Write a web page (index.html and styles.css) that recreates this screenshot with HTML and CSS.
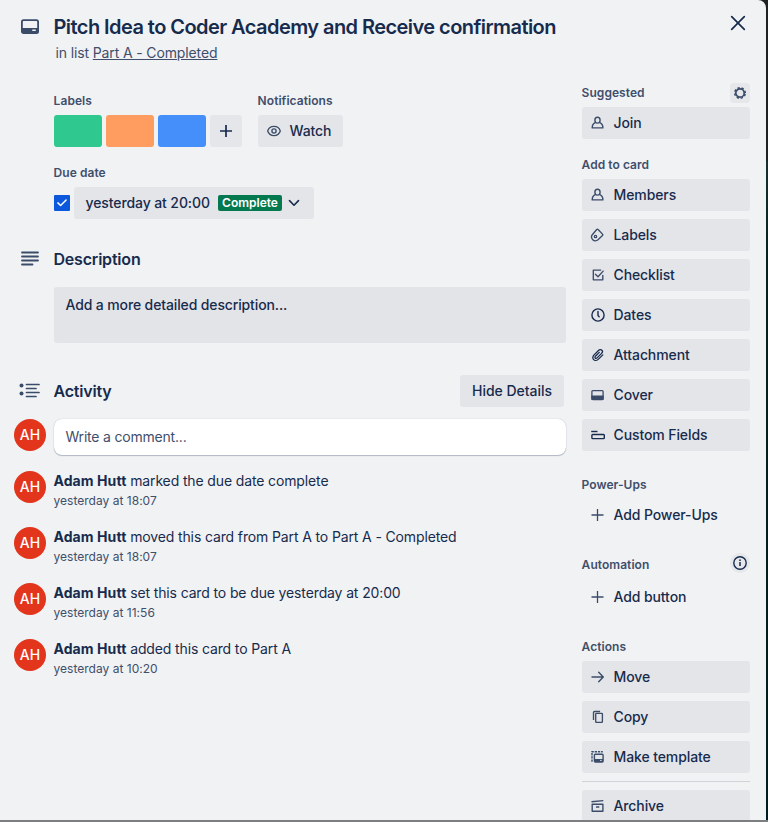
FILE: index.html
```html
<!DOCTYPE html>
<html lang="en">
<head>
<meta charset="utf-8">
<title>Pitch Idea to Coder Academy and Receive confirmation</title>
<link rel="stylesheet" href="styles.css">
</head>
<body>
<div class="card">
  <header class="header">
    <svg class="icon header-icon" width="20" height="20" viewBox="0 0 20 20"><rect x="1.900" y="3.200" width="16.200" height="12.800" rx="1.600" fill="none" stroke="currentColor" stroke-width="1.800"/><path d="M2 11h16v4.500H2z" fill="currentColor"/><rect x="12.200" y="12.500" width="3.600" height="1.500" rx=".5" fill="#f1f2f4"/></svg>
    <div class="heading">
      <h1>Pitch Idea to Coder Academy and Receive confirmation</h1>
      <p class="sub">in list <a class="list-link">Part A - Completed</a></p>
    </div>
    <svg class="close" width="16" height="16" viewBox="0 0 16 16"><path d="M1.700 1.700l12.600 12.600M14.300 1.700L1.700 14.300" fill="none" stroke="currentColor" stroke-width="1.700" stroke-linecap="round"/></svg>
  </header>
  <div class="body">
    <main class="main">
      <div class="meta">
        <section>
          <h3>Labels</h3>
          <div class="chips">
            <span class="chip green"></span><span class="chip orange"></span><span class="chip blue"></span>
            <span class="chip add"><svg width="14" height="14" viewBox="0 0 14 14"><path d="M7 1v12M1 7h12" stroke="currentColor" stroke-width="1.700"/></svg></span>
          </div>
        </section>
        <section>
          <h3>Notifications</h3>
          <div class="btn watch"><svg class="icon" width="16" height="16" viewBox="0 0 16 16"><path d="M1.700 8C2.600 5.200 5.100 3.400 8 3.400S13.400 5.200 14.300 8C13.400 10.800 10.900 12.600 8 12.600S2.600 10.800 1.700 8z" fill="none" stroke="currentColor" stroke-width="1.300"/><circle cx="8" cy="8" r="2.100" fill="none" stroke="currentColor" stroke-width="1.400"/></svg><span>Watch</span></div>
        </section>
      </div>
      <section class="due">
        <h3>Due date</h3>
        <div class="due-row">
          <span class="check"><svg width="16" height="16" viewBox="0 0 16 16"><path d="M3.900 7.900l2.700 2.600 5.500-5.500" fill="none" stroke="#fff" stroke-width="1.500" stroke-linecap="round" stroke-linejoin="round"/></svg></span>
          <div class="btn due-btn"><span>yesterday at 20:00</span><b class="badge">Complete</b><svg width="12" height="8" viewBox="0 0 12 8"><path d="M1.500 1.600L6 6.200l4.500-4.600" fill="none" stroke="currentColor" stroke-width="1.600" stroke-linecap="round" stroke-linejoin="round"/></svg></div>
        </div>
      </section>
      <div class="section-title description-title">
        <svg class="icon" width="20" height="20" viewBox="0 0 20 20"><path d="M2 3.500h16M2 7.500h16M2 11.500h16M2 15.500h10.500" stroke="currentColor" stroke-width="1.800" stroke-linecap="round"/></svg>
        <h2>Description</h2>
      </div>
      <div class="description">Add a more detailed description...</div>
      <div class="section-title activity-title">
        <svg class="icon" width="22" height="16" viewBox="0 0 22 16"><g stroke="currentColor" stroke-width="1.700" stroke-linecap="round"><path d="M7.500 1.500h12.500M7.500 5.500h9.500M7.500 9.500h12.500M7.500 13.500h9.500"/></g><circle cx="2.500" cy="2.600" r="2" fill="currentColor"/><circle cx="2.500" cy="10.600" r="2" fill="currentColor"/></svg>
        <h2>Activity</h2>
        <div class="btn hide">Hide Details</div>
      </div>
      <div class="entry comment-row"><span class="avatar">AH</span><div class="comment">Write a comment...</div></div>
      <div class="entry"><span class="avatar">AH</span><div><p><b>Adam Hutt</b> marked the due date complete</p><time>yesterday at 18:07</time></div></div>
      <div class="entry"><span class="avatar">AH</span><div><p><b>Adam Hutt</b> moved this card from Part A to Part A - Completed</p><time>yesterday at 18:07</time></div></div>
      <div class="entry"><span class="avatar">AH</span><div><p><b>Adam Hutt</b> set this card to be due yesterday at 20:00</p><time>yesterday at 11:56</time></div></div>
      <div class="entry"><span class="avatar">AH</span><div><p><b>Adam Hutt</b> added this card to Part A</p><time>yesterday at 10:20</time></div></div>
    </main>
    <aside class="side">
      <section class="group suggested">
        <h3>Suggested <span class="gear"><svg width="14" height="14" viewBox="0 0 14 14" fill="none" stroke="currentColor"><circle cx="7" cy="7" r="4.200" stroke-width="1.700"/><circle cx="7" cy="7" r="5.300" stroke-width="1.500" stroke-dasharray="2.300 1.863" stroke-dashoffset="-.931"/></svg></span></h3>
        <div class="btn"><svg class="icon" width="16" height="16" viewBox="0 0 16 16"><g fill="none" stroke="currentColor" stroke-width="1.400"><ellipse cx="7.500" cy="5.200" rx="2.600" ry="2.900"/><path d="M5.200 7.700C3.300 8.500 2.200 10.400 2.200 12.900h10.700c0-2.500-1.100-4.400-3-5.200" stroke-linejoin="round"/></g></svg>Join</div>
      </section>
      <section class="group">
        <h3>Add to card</h3>
        <div class="btn"><svg class="icon" width="16" height="16" viewBox="0 0 16 16"><g fill="none" stroke="currentColor" stroke-width="1.400"><ellipse cx="7.500" cy="5.200" rx="2.600" ry="2.900"/><path d="M5.200 7.700C3.300 8.500 2.200 10.400 2.200 12.900h10.700c0-2.500-1.100-4.400-3-5.200" stroke-linejoin="round"/></g></svg>Members</div>
        <div class="btn"><svg class="icon" width="16" height="16" viewBox="0 0 16 16"><path d="M2.300 7.700L6.700 2.500q.7-.7 1.400 0l4.400 4.600q.6.700 0 1.400L8 12.800c-1.500 1.300-3.900 1.200-5.200-.100C1.400 11.300 1.200 9.200 2.300 7.700z" fill="none" stroke="currentColor" stroke-width="1.350"/><circle cx="5.500" cy="9.500" r="1.200" fill="none" stroke="currentColor" stroke-width="1.300"/></svg>Labels</div>
        <div class="btn"><svg class="icon" width="16" height="16" viewBox="0 0 16 16"><path d="M10.700 3.100H3.300v9.700h9.500V8.300M5.400 7.200l2.600 2.500 5.200-5.600" fill="none" stroke="currentColor" stroke-width="1.350" stroke-linejoin="round" stroke-linecap="round"/></svg>Checklist</div>
        <div class="btn"><svg class="icon dark" width="16" height="16" viewBox="0 0 16 16"><circle cx="8" cy="8" r="6.100" fill="none" stroke="currentColor" stroke-width="1.400"/><path d="M8 4.500v4l1.200 1.200" fill="none" stroke="currentColor" stroke-width="1.400" stroke-linecap="round"/></svg>Dates</div>
        <div class="btn"><svg class="icon dark" width="16" height="16" viewBox="0 0 16 16"><path d="M12.800 7.900l-4.300 4.200c-1.500 1.500-3.700 1.700-4.900.5s-1-3.200.5-4.700l4.400-4.400c1-1 2.600-1.100 3.400-.300s.7 2.200-.3 3.200L7.100 10.900c-.6.600-1.400.7-1.900.2s-.4-1.200.2-1.800l3.900-3.900" fill="none" stroke="currentColor" stroke-width="1.300" stroke-linecap="round"/></svg>Attachment</div>
        <div class="btn"><svg class="icon" width="16" height="16" viewBox="0 0 16 16"><rect x="1.900" y="3.600" width="11.200" height="8.900" rx=".9" fill="none" stroke="currentColor" stroke-width="1.300"/><path d="M1.300 8.500h12.400v3.400q0 1.200-1.200 1.200h-10q-1.200 0-1.200-1.200z" fill="currentColor"/></svg>Cover</div>
        <div class="btn"><svg class="icon dark" width="16" height="16" viewBox="0 0 16 16"><path d="M1.200 4.500h6.300" stroke="currentColor" stroke-width="1.400"/><rect x="1.900" y="7.500" width="12.400" height="4.100" rx=".8" fill="none" stroke="currentColor" stroke-width="1.400"/></svg>Custom Fields</div>
      </section>
      <section class="group later">
        <h3>Power-Ups</h3>
        <div class="btn plain"><svg class="icon" width="16" height="16" viewBox="0 0 16 16"><path d="M7.500 2v12M1.500 8h12" stroke="currentColor" stroke-width="1.300"/></svg>Add Power-Ups</div>
      </section>
      <section class="group later automation">
        <h3>Automation <span class="info"><svg width="16" height="16" viewBox="0 0 16 16"><circle cx="8" cy="8" r="6.200" fill="none" stroke="currentColor" stroke-width="1.400"/><path d="M8 7v4" stroke="currentColor" stroke-width="1.500"/><circle cx="8" cy="5.200" r=".85" fill="currentColor"/></svg></span></h3>
        <div class="btn plain"><svg class="icon" width="16" height="16" viewBox="0 0 16 16"><path d="M7.500 2v12M1.500 8h12" stroke="currentColor" stroke-width="1.300"/></svg>Add button</div>
      </section>
      <section class="group later">
        <h3>Actions</h3>
        <div class="btn"><svg class="icon" width="16" height="16" viewBox="0 0 16 16"><path d="M2 8h11M8.700 3.300L13.300 8l-4.600 4.700" fill="none" stroke="currentColor" stroke-width="1.400" stroke-linecap="round" stroke-linejoin="round"/></svg>Move</div>
        <div class="btn"><svg class="icon" width="16" height="16" viewBox="0 0 16 16"><rect x="5.700" y="4.300" width="6.700" height="9.100" rx=".7" fill="none" stroke="currentColor" stroke-width="1.350"/><path d="M3.500 11V3.500q0-1 1-1h5.600" fill="none" stroke="currentColor" stroke-width="1.350"/></svg>Copy</div>
        <div class="btn"><svg class="icon" width="16" height="16" viewBox="0 0 16 16"><rect x="4.400" y="5.200" width="8.700" height="7.800" rx=".9" fill="none" stroke="currentColor" stroke-width="1.400"/><path d="M4.400 10h8.700v3H4.400z" fill="currentColor"/><path d="M10 11.400h1.700" stroke="#e4e6ea" stroke-width=".9"/><path d="M2 12.800V2.700h10.800" fill="none" stroke="currentColor" stroke-width="1.400" stroke-dasharray="2.300 .9"/></svg>Make template</div>
        <hr>
        <div class="btn"><svg class="icon" width="16" height="16" viewBox="0 0 16 16"><path d="M2.200 6.300h10.700v6.900H2.200zM6 9h3.300" fill="none" stroke="currentColor" stroke-width="1.400" stroke-linejoin="round"/><path d="M1.500 3.800l11.800-1.200" stroke="currentColor" stroke-width="1.400"/></svg>Archive</div>
      </section>
    </aside>
  </div>
</div>
</body>
</html>
```
FILE: styles.css
```css
* { box-sizing: border-box; }
body {
  margin: 0;
  height: 822px;
  overflow: hidden;
  background: linear-gradient(#7c7e80, #7c7e80) bottom / 100% 2px no-repeat,
    linear-gradient(#202124 0 160px, #17302f 162px, #062020 260px, #021b1e 100%);
  font: 14px/20px Inter, "Liberation Sans", sans-serif;
  color: #172b4d;
}
h1, h2, h3, p { margin: 0; }
svg { flex: none; display: block; }
.card {
  width: 766px;
  height: 820px;
  overflow: hidden;
  background: #f1f2f4;
  border-top-right-radius: 8px;
}
.icon, .gear { color: #3b4c69; }
.dark { color: #172b4d; }
.header { display: flex; height: 83px; padding: 15px 20px 0 19.5px; }
.header-icon { margin-top: 2px; }
.heading { flex: 1; margin-left: 14px; }
h1 { font-size: 20px; line-height: 24px; font-weight: 600; letter-spacing: -.56px; white-space: nowrap; }
.sub { padding: 4px 0 0 2px; color: #3f4f6b; letter-spacing: -.13px; }
.list-link { text-decoration: underline; }
.body { display: grid; grid-template-columns: 552px 168px; gap: 16px; padding-left: 14px; }
.main { padding-top: 8px; }
.meta { display: flex; gap: 16px; padding-left: 40px; }
h3 { margin-bottom: 4px; font-size: 12px; line-height: 20px; font-weight: 600; color: #3f4f6b; text-indent: -.4px; letter-spacing: .05px; }
.chips { display: flex; gap: 4px; }
.chip { width: 48px; height: 32px; border-radius: 3px; }
.green { background: #2fc88f; }
.orange { background: #ff9c5f; }
.blue { background: #458ffb; }
.add { width: 32px; background: #e4e6ea; display: grid; place-items: center; }
.btn { display: flex; align-items: center; height: 32px; border-radius: 3px; background: #e4e5e9; font-weight: 500; letter-spacing: -.1px; white-space: nowrap; }
.watch { width: 85px; gap: 7.5px; padding-left: 8px; }
.due { margin-top: 16px; padding-left: 40px; }
.due-row { display: flex; align-items: center; gap: 4px; }
.check { width: 16px; height: 16px; background: #0c58dc; border-radius: 1px; }
.due-btn { width: 240px; padding-left: 11.500px; }
.due-btn span { width: 124.500px; }
.badge { width: 64px; height: 16px; margin: 0 6px 0 8px; border-radius: 2px; background: #04784f; color: #fff; font-size: 12px; line-height: 16px; font-weight: 600; letter-spacing: 0; text-align: center; }
.section-title { display: flex; align-items: center; }
h2 { font-size: 16px; line-height: 20px; font-weight: 600; letter-spacing: -.2px; }
.description-title { margin-top: 30px; padding-left: 6px; gap: 13.500px; }
.description { height: 56px; margin: 18px 0 0 40px; padding: 8px 11.500px; background: #e3e4e8; border-radius: 3px; font-weight: 500; letter-spacing: -.13px; }
.activity-title { margin-top: 32px; padding: 0 2px 0 5px; }
.activity-title h2 { margin-left: 12.500px; }
.hide { width: 104px; margin-left: auto; justify-content: center; letter-spacing: -.03px; }
.entry { display: flex; height: 56px; gap: 7.500px; letter-spacing: -.13px; }
.comment-row { height: 52px; margin-top: 12px; gap: 8px; }
.avatar { flex: none; width: 32px; height: 32px; border-radius: 50%; background: #e2351b; color: #fff; text-align: center; line-height: 32px; font-size: 14px; font-weight: 500; letter-spacing: 0; }
.comment { width: 512px; height: 36px; padding: 8px 11.500px; border-radius: 8px; background: #fff; color: #3f4f6b; letter-spacing: -.2px; box-shadow: 0 1px 1px #091e4240, 0 0 1px #091e424f; }
.entry b { font-weight: 700; letter-spacing: .08px; }
time { display: block; font-size: 12px; color: #3f4f6b; letter-spacing: .02px; }
.group { display: flex; flex-direction: column; margin-top: 16px; }
.suggested { margin-top: 0; }
.later { margin-top: 24px; }
.side h3 { display: flex; justify-content: space-between; height: 20px; }
.side .btn { padding-left: 8px; gap: 7.500px; }
.side .btn + .btn { margin-top: 8px; }
.side .plain { background: none; }
.gear, .info { width: 20px; height: 20px; display: grid; place-items: center; background: #e6e7eb; border-radius: 4px; }
.info { border-radius: 50%; margin-top: -2px; color: #172b4d; }
.side .automation h3 { margin-bottom: 6px; }
hr { width: 100%; height: 1px; margin: 8px 0; border: 0; background: #d0d4d9; }
```
